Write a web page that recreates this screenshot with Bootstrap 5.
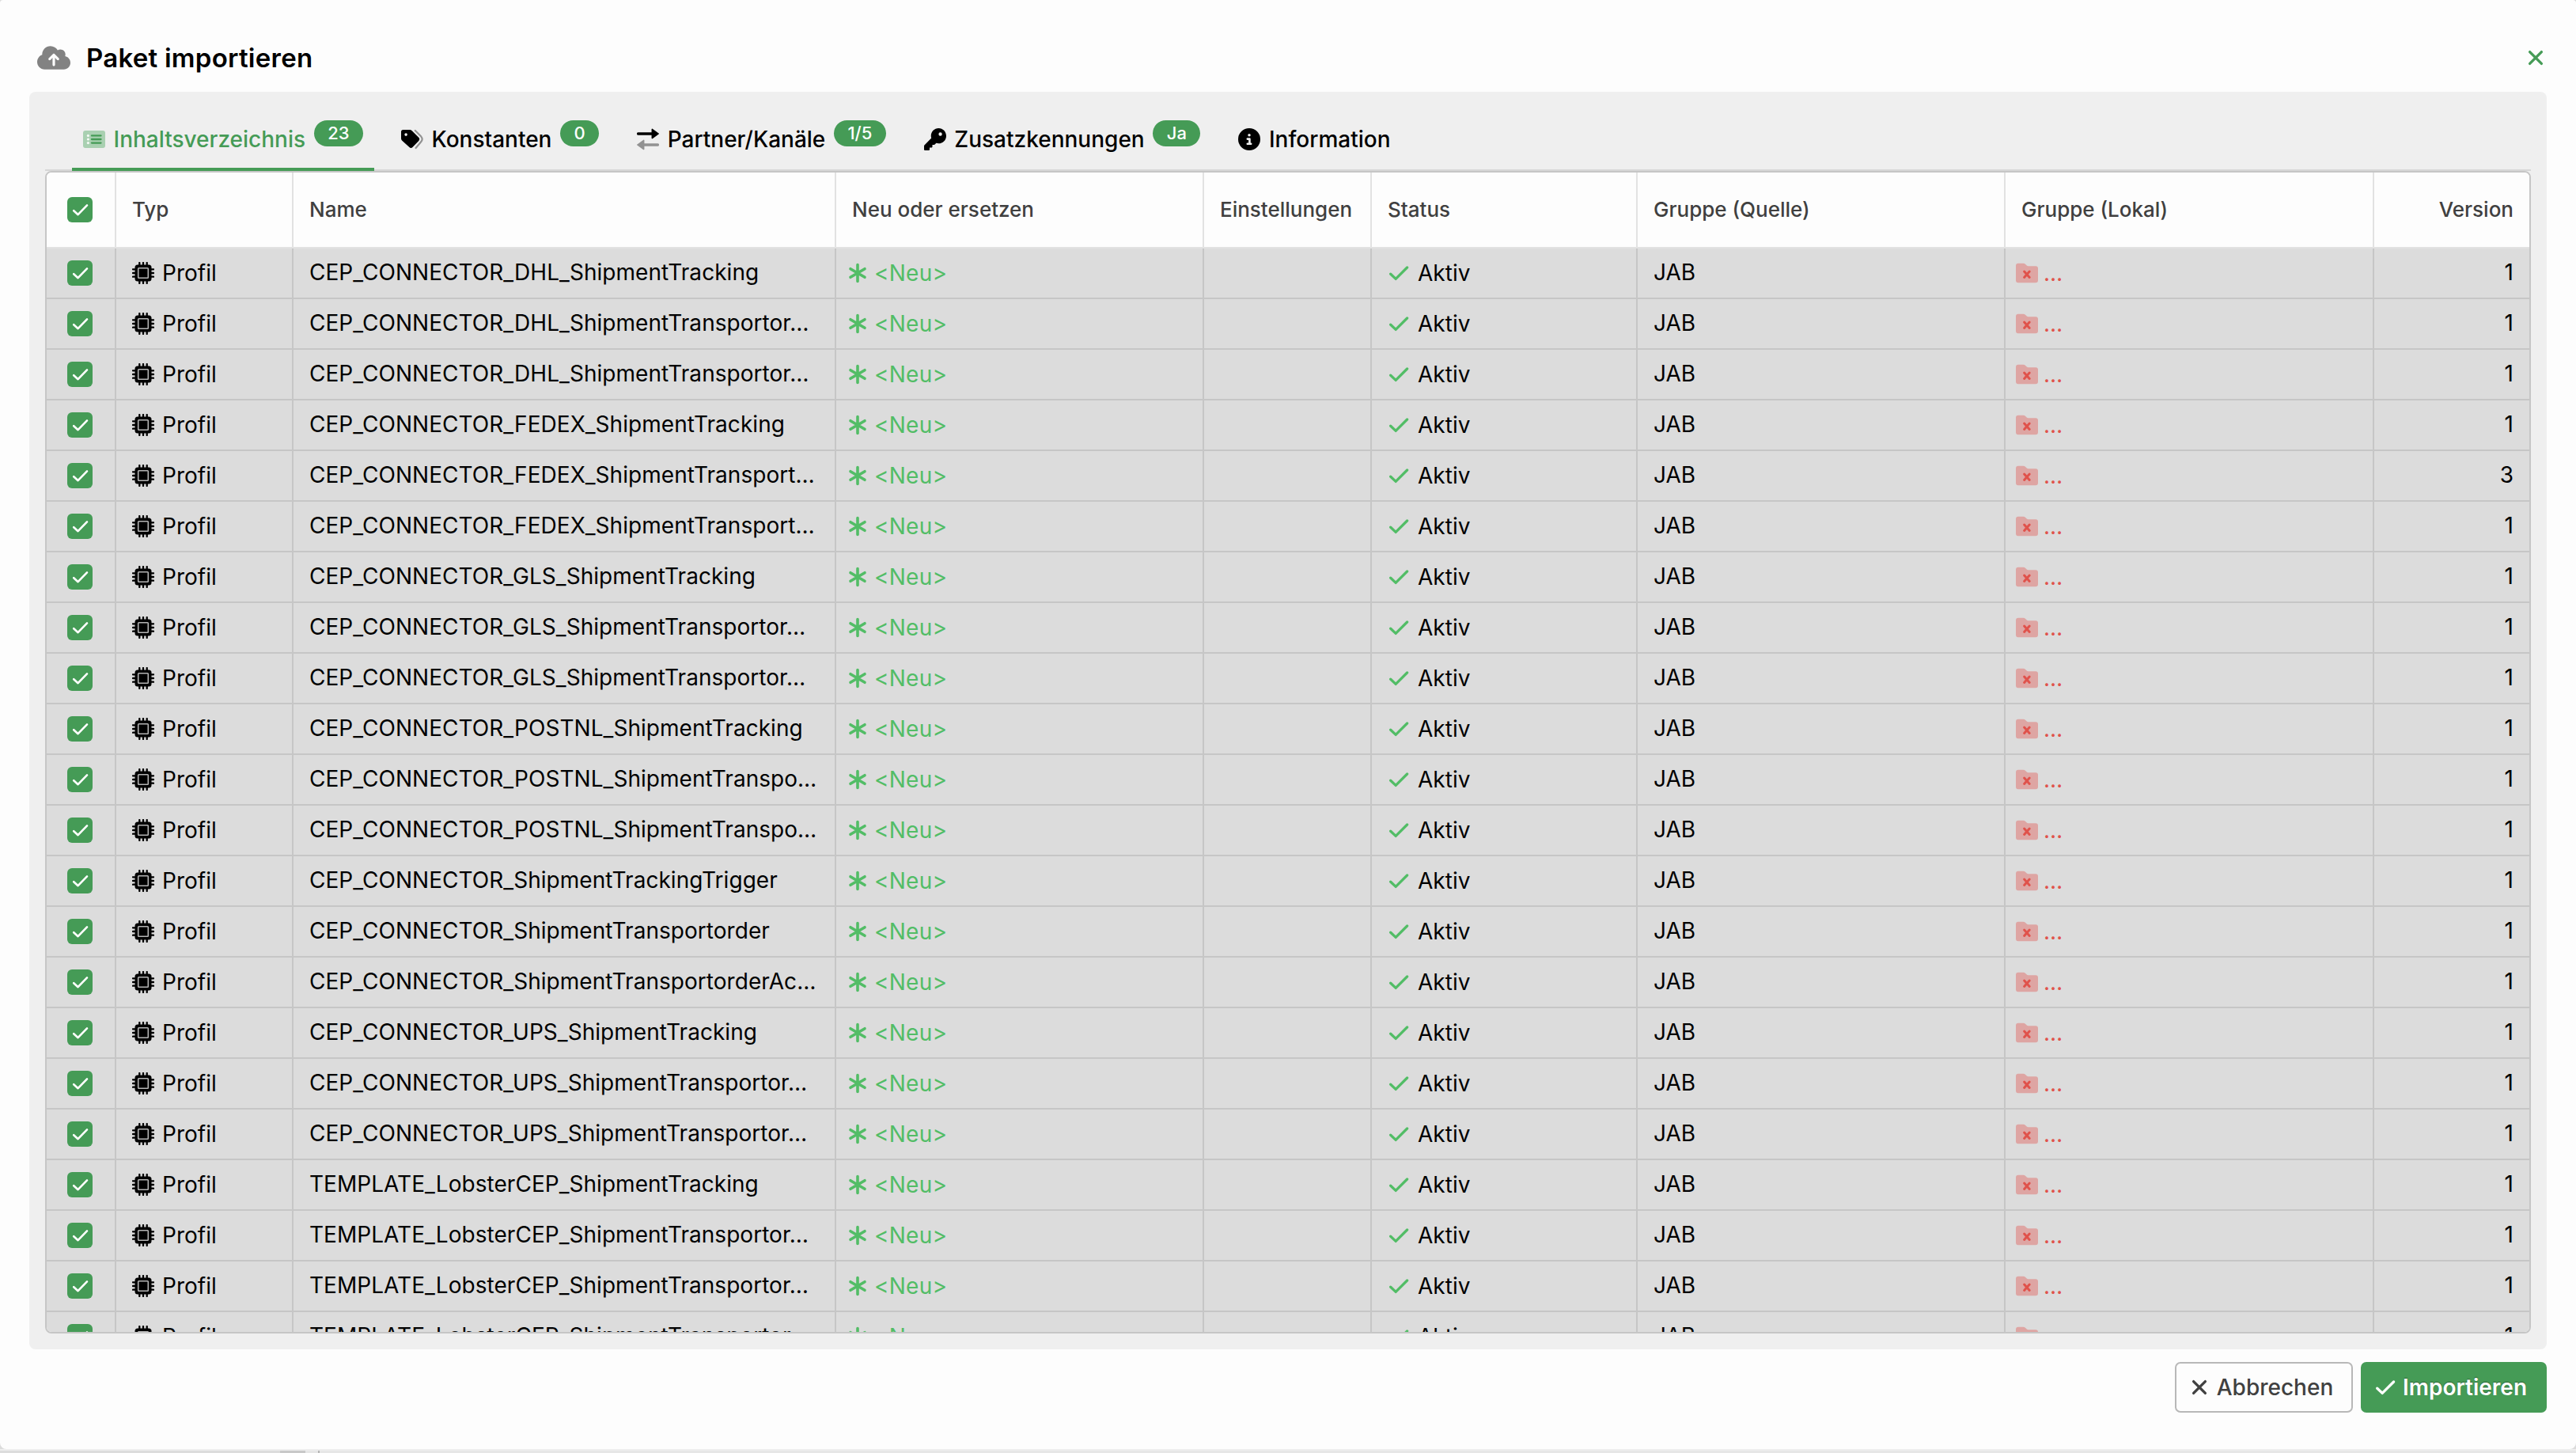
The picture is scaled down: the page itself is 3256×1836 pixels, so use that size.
<!DOCTYPE html>
<html lang="de">
<head>
<meta charset="utf-8">
<title>Paket importieren</title>
<link href="https://cdn.jsdelivr.net/npm/bootstrap@5.3.0/dist/css/bootstrap.min.css" rel="stylesheet">
<script src="https://cdn.jsdelivr.net/npm/bootstrap@5.3.0/dist/js/bootstrap.bundle.min.js"></script>
<style>
  :root { --brand: #459b56; --fresh: #52bd66; --line: #c6c6c6; }
  html, body { height: 100%; }
  body { font: 400 28px/34px Inter, "Liberation Sans", sans-serif; color: #000; background: #dcdcdc; overflow: hidden; }
  svg { display: block; flex: none; }
  .dialog { height: 1831px; background: #fdfdfd; border-radius: 4px 4px 8px 8px; padding: 0 37px; }
  .dialog-head { height: 116px; padding: 30px 0 0 10px; }
  .dialog-title { font-size: 33px; line-height: 40px; letter-spacing: .25px; font-weight: 600; margin: 0 0 0 20px; color: #000; }
  .close-x { color: var(--brand); }
  .panel { height: 1589px; background: #efefef; border-radius: 8px; padding: 0 20px 20px; }
  .tabs { height: 100px; border-bottom: 2px solid #d6d6d6; padding-left: 34px; gap: 20px; }
  .tabs .nav-link { height: 76px; margin-bottom: -2px; padding: 0 14px 4px; border-radius: 4px 4px 0 0; color: #000; font-weight: 500; }
  .tabs .nav-link.active { color: var(--brand); background: linear-gradient(var(--brand), var(--brand)) bottom/100% 4px no-repeat; }
  .tabs .nav-link > svg { margin-right: 10.5px; }
  .count { height: 33px; line-height: 33px; border-radius: 17px; padding: 0 17.5px; margin: 0 0 15px 10.6px; background: var(--brand); color: #fff; font-size: 22px; font-weight: 500; }
  .grid-frame { height: 1469px; border: 2px solid var(--line); border-radius: 8px; overflow: hidden; background: #fdfdfd; }
  .grid-table { table-layout: fixed; width: 3138px; border-collapse: separate; border-spacing: 0; }
  .grid-table th { height: 96px; padding: 0 20px; font-size: 26px; font-weight: 500; color: #404040; background: #fdfdfd; border-right: 2px solid #e2e2e2; border-bottom: 2px solid #e2e2e2; vertical-align: middle; white-space: nowrap; }
  .grid-table td { height: 64px; padding: 0 20px; letter-spacing: .04px; background: #dcdcdc; border-right: 2px solid var(--line); border-bottom: 2px solid var(--line); vertical-align: middle; white-space: nowrap; overflow: hidden; }
  .grid-table tr > :last-child { border-right: 0; }
  .grid-table td.plain { padding-bottom: 2px; }
  .grid-table .tick { padding: 0 0 0 26px; }
  .grid-table .snug { padding-left: 13px; }
  .tickbox { width: 32px; height: 32px; border-radius: 6px; background: var(--brand); color: #fff; }
  .fresh { color: var(--fresh); letter-spacing: .25px; }
  .gone { color: #e0524b; }
  .dialog-foot { padding-top: 16px; gap: 10px; }
  .dialog-foot .btn { height: 64px; padding: 0 8px 0 0; border-radius: 7px; border-width: 2px; font-size: 28px; line-height: 34px; }
  .btn-cancel { width: 225px; border-color: #b8b8b8; color: #404040; font-weight: 500; }
  .btn-import { width: 235px; background: var(--brand); border-color: var(--brand); color: #fff; font-weight: 600; text-shadow: 0 -1px 1px rgba(0,0,0,.35); }
  .backdrop-row { height: 5px; border-top: 2px solid #eee; background: #e6e6e6; }
</style>
</head>
<body>
<svg width="0" height="0" class="position-absolute">
  <symbol id="i-check" viewBox="0 0 28 28"><path d="M3.700 15.200 10.200 21.400 24.600 7" fill="none" stroke="currentColor" stroke-width="3.300" stroke-linecap="round" stroke-linejoin="round"/></symbol>
  <symbol id="i-tick" viewBox="0 0 32 32"><path d="M8.200 17.200 13.600 22.200 25 10.400" fill="none" stroke="currentColor" stroke-width="2.600" stroke-linecap="round" stroke-linejoin="round"/></symbol>
  <symbol id="i-x" viewBox="0 0 28 28"><path d="M6.600 6.600 21.400 21.400M21.400 6.600 6.600 21.400" fill="none" stroke="currentColor" stroke-width="3.300" stroke-linecap="round"/></symbol>
  <symbol id="i-star" viewBox="0 0 28 28"><path d="M14 3.500V24.500M5 8.700 23 19.300M23 8.700 5 19.300" fill="none" stroke="currentColor" stroke-width="3.600" stroke-linecap="round"/></symbol>
  <symbol id="i-chip" viewBox="0 0 28 28">
    <path d="M9.300 1v26M14 1v26M18.700 1v26M1 9.300h26M1 14h26M1 18.700h26" stroke="#000" stroke-width="2.300" stroke-linecap="round"/>
    <rect x="3.500" y="3.500" width="21" height="21" rx="3.500"/>
    <rect x="7.700" y="7.700" width="12.600" height="12.600" rx=".8" fill="none" stroke="#b4b4b4" stroke-width="1.600"/>
  </symbol>
  <symbol id="i-folder" viewBox="0 0 28 28">
    <path d="M3 1.700h6.500c1 0 1.700.3 2.400 1l1.900 1.700c.5.500 1 .8 1.800.8H25a3 3 0 0 1 3 3v15a3 3 0 0 1-3 3H3a3 3 0 0 1-3-3V4.700a3 3 0 0 1 3-3z" fill="#dea5a3"/>
    <path d="M10.600 12l6.600 7.400M17.200 12l-6.600 7.400" stroke="currentColor" stroke-width="3" stroke-linecap="round"/>
  </symbol>
</svg>

<main class="dialog d-flex flex-column">
  <header class="dialog-head d-flex align-items-center">
    <svg width="42" height="34" viewBox="0 0 640 512"><path fill="#828282" d="M144 480C64.500 480 0 415.500 0 336c0-62.800 40.200-116.200 96.200-135.900c-.1-2.700-.2-5.400-.2-8.100c0-88.400 71.600-160 160-160c59.300 0 111 32.200 138.700 80.200C409.900 102 428.300 96 448 96c53 0 96 43 96 96c0 12.200-2.300 23.800-6.400 34.600C596 238.400 640 290.100 640 352c0 70.700-57.300 128-128 128H144zm79-217c-9.400 9.400-9.400 24.600 0 33.900s24.600 9.400 33.900 0l39-39V392c0 13.300 10.700 24 24 24s24-10.700 24-24V257.900l39 39c9.400 9.400 24.600 9.400 33.900 0s9.400-24.600 0-33.900l-80-80c-9.400-9.400-24.600-9.400-33.900 0l-80 80z"/></svg>
    <h1 class="dialog-title">Paket importieren</h1>
    <svg class="close-x ms-auto" width="28" height="28" role="button"><use href="#i-x"/></svg>
  </header>

  <section class="panel">
    <ul class="tabs nav flex-nowrap align-items-end">
      <li class="nav-item"><a class="nav-link active d-flex align-items-center" href="#">
        <svg width="28" height="28" viewBox="0 0 28 28"><rect y="3" width="28" height="22" rx="3" fill="#a9d0b1"/><g fill="#f4faf5"><circle cx="6.400" cy="9.400" r="1.600"/><circle cx="6.400" cy="14" r="1.600"/><circle cx="6.400" cy="18.600" r="1.600"/></g><path d="M11 9.400h11.500M11 14h11.500M11 18.600h11.500" stroke="#459b56" stroke-width="2.300" stroke-linecap="round"/></svg>
        Inhaltsverzeichnis<span class="count">23</span></a></li>
      <li class="nav-item"><a class="nav-link d-flex align-items-center" href="#">
        <svg width="28" height="28" viewBox="0 0 28 28"><path d="M17.800 3 25.300 10.600Q28 13.800 25.300 17L18.600 25" fill="none" stroke="#929292" stroke-width="2.200" stroke-linecap="round"/><path fill-rule="evenodd" d="M0 4.500A2.500 2.500 0 0 1 2.500 2H11c1 0 1.800.3 2.500 1l8.800 8.800c1.200 1.200 1.200 2.900 0 4.100l-7.800 8.200c-1.200 1.200-2.900 1.200-4.100 0L1 15.400c-.7-.7-1-1.500-1-2.500zM6.100 6.300a1.800 1.800 0 1 0 0 3.600 1.800 1.800 0 1 0 0-3.600z"/></svg>
        Konstanten<span class="count">0</span></a></li>
      <li class="nav-item"><a class="nav-link d-flex align-items-center" href="#">
        <svg width="28" height="28" viewBox="0 0 28 28"><path d="M1.700 7H20" stroke="#000" stroke-width="3.500" stroke-linecap="round"/><path d="M19.300 1.400v11.200L27.200 7z" stroke="#000" stroke-width="1.500" stroke-linejoin="round"/><path d="M26.300 21H8" stroke="#929292" stroke-width="3.500" stroke-linecap="round"/><path d="M8.700 15.400v11.200L.8 21z" fill="#929292" stroke="#929292" stroke-width="1.500" stroke-linejoin="round"/></svg>
        Partner/Kanäle<span class="count">1/5</span></a></li>
      <li class="nav-item"><a class="nav-link d-flex align-items-center" href="#">
        <svg width="28" height="28" viewBox="0 0 512 512"><path d="M336 352c97.200 0 176-78.800 176-176S433.200 0 336 0S160 78.800 160 176c0 18.700 2.900 36.800 8.300 53.700L7 391c-4.500 4.500-7 10.600-7 17v80c0 13.300 10.700 24 24 24h80c13.300 0 24-10.700 24-24V448h40c13.300 0 24-10.700 24-24V384h40c6.400 0 12.500-2.500 17-7l33.300-33.300c16.900 5.400 35 8.300 53.700 8.300zM376 96a40 40 0 1 1 0 80 40 40 0 1 1 0-80z"/></svg>
        Zusatzkennungen<span class="count">Ja</span></a></li>
      <li class="nav-item"><a class="nav-link d-flex align-items-center" href="#">
        <svg width="28" height="28" viewBox="0 0 512 512"><path d="M256 512A256 256 0 1 0 256 0a256 256 0 1 0 0 512zM216 336h24V272H216c-13.300 0-24-10.700-24-24s10.700-24 24-24h48c13.300 0 24 10.700 24 24v88h8c13.300 0 24 10.700 24 24s-10.700 24-24 24H216c-13.300 0-24-10.700-24-24s10.700-24 24-24zm40-208a32 32 0 1 1 0 64 32 32 0 1 1 0-64z"/></svg>
        Information</a></li>
    </ul>

    <div class="grid-frame">
      <table class="grid-table">
        <colgroup><col style="width:88px"><col style="width:224px"><col style="width:686px"><col style="width:465px"><col style="width:212px"><col style="width:336px"><col style="width:465px"><col style="width:466px"><col style="width:196px"></colgroup>
        <thead><tr>
          <th class="tick"><div class="tickbox"><svg width="32" height="32"><use href="#i-tick"/></svg></div></th>
          <th>Typ</th><th>Name</th><th>Neu oder ersetzen</th><th>Einstellungen</th><th>Status</th><th>Gruppe (Quelle)</th><th>Gruppe (Lokal)</th><th class="text-end">Version</th>
        </tr></thead>
        <tbody id="entries"></tbody>
      </table>
    </div>
  </section>

  <footer class="dialog-foot d-flex justify-content-end">
    <button type="button" class="btn btn-cancel d-flex align-items-center justify-content-center"><svg class="me-2" width="28" height="28"><use href="#i-x"/></svg>Abbrechen</button>
    <button type="button" class="btn btn-import d-flex align-items-center justify-content-center"><svg class="me-2" width="28" height="28"><use href="#i-check"/></svg>Importieren</button>
  </footer>
</main>
<div class="backdrop-row d-flex"><div style="width:354px;background:#dcdcdc"></div><div style="width:32px;background:#c8c8c8"></div><div style="width:16px"></div><div style="width:2px;background:#b4b4b4"></div></div>

<script>
  const entries = [
    ["CEP_CONNECTOR_DHL_ShipmentTracking", 1],
    ["CEP_CONNECTOR_DHL_ShipmentTransportor…", 1],
    ["CEP_CONNECTOR_DHL_ShipmentTransportor…", 1],
    ["CEP_CONNECTOR_FEDEX_ShipmentTracking", 1],
    ["CEP_CONNECTOR_FEDEX_ShipmentTransport…", 3],
    ["CEP_CONNECTOR_FEDEX_ShipmentTransport…", 1],
    ["CEP_CONNECTOR_GLS_ShipmentTracking", 1],
    ["CEP_CONNECTOR_GLS_ShipmentTransportor…", 1],
    ["CEP_CONNECTOR_GLS_ShipmentTransportor…", 1],
    ["CEP_CONNECTOR_POSTNL_ShipmentTracking", 1],
    ["CEP_CONNECTOR_POSTNL_ShipmentTranspo…", 1],
    ["CEP_CONNECTOR_POSTNL_ShipmentTranspo…", 1],
    ["CEP_CONNECTOR_ShipmentTrackingTrigger", 1],
    ["CEP_CONNECTOR_ShipmentTransportorder", 1],
    ["CEP_CONNECTOR_ShipmentTransportorderAc…", 1],
    ["CEP_CONNECTOR_UPS_ShipmentTracking", 1],
    ["CEP_CONNECTOR_UPS_ShipmentTransportor…", 1],
    ["CEP_CONNECTOR_UPS_ShipmentTransportor…", 1],
    ["TEMPLATE_LobsterCEP_ShipmentTracking", 1],
    ["TEMPLATE_LobsterCEP_ShipmentTransportor…", 1],
    ["TEMPLATE_LobsterCEP_ShipmentTransportor…", 1],
    ["TEMPLATE_LobsterCEP_ShipmentTransportor…", 1]
  ];
  const icon = (id, gap) => `<svg width="28" height="28" style="margin-right:${gap}px"><use href="#i-${id}"/></svg>`;
  document.getElementById("entries").innerHTML = entries.map(([name, version]) => `<tr>
    <td class="tick"><div class="tickbox"><svg width="32" height="32"><use href="#i-tick"/></svg></div></td>
    <td><div class="d-flex align-items-center">${icon("chip", 10)}Profil</div></td>
    <td class="plain">${name}</td>
    <td class="snug"><div class="d-flex align-items-center fresh">${icon("star", 7)}&lt;Neu&gt;</div></td>
    <td></td>
    <td><div class="d-flex align-items-center"><span class="fresh">${icon("check", 10)}</span>Aktiv</div></td>
    <td class="plain">JAB</td>
    <td class="snug"><div class="d-flex align-items-center gone">${icon("folder", 7)}…</div></td>
    <td class="plain text-end">${version}</td>
  </tr>`).join("");
</script>
</body>
</html>
